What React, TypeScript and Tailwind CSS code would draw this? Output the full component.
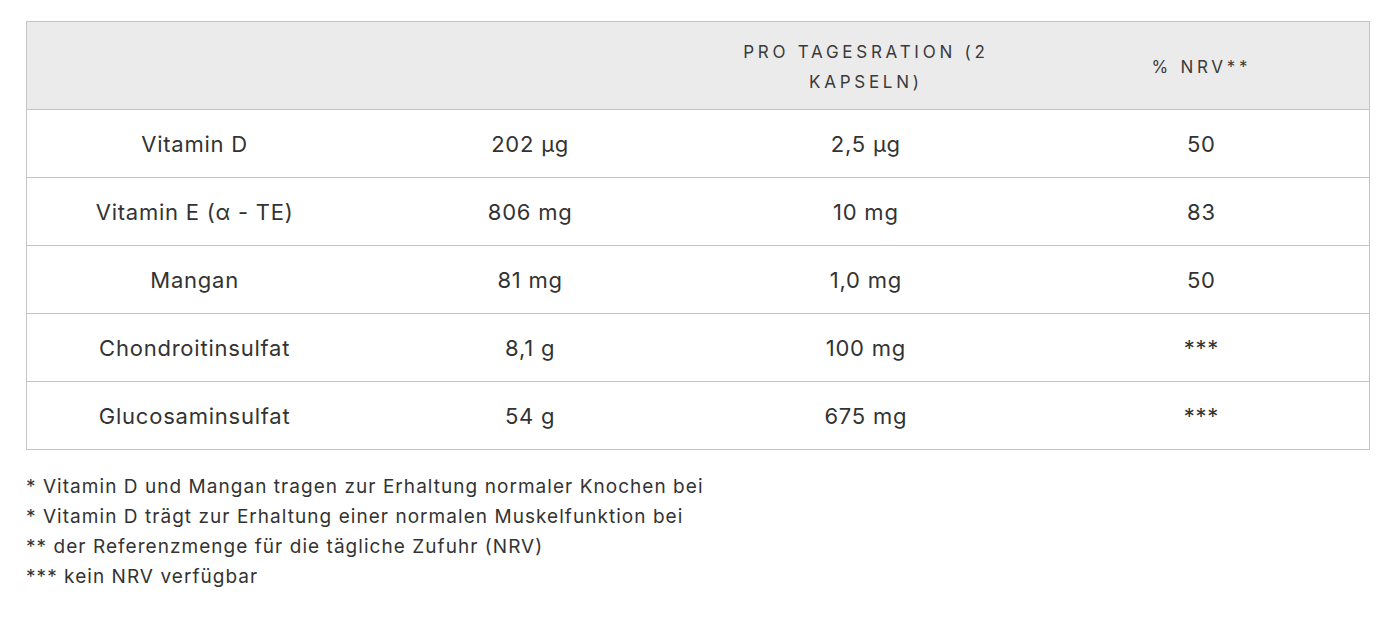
import React from "react";

const rows = [
  ["Vitamin D", "202 µg", "2,5 µg", "50"],
  ["Vitamin E (α - TE)", "806 mg", "10 mg", "83"],
  ["Mangan", "81 mg", "1,0 mg", "50"],
  ["Chondroitinsulfat", "8,1 g", "100 mg", "***"],
  ["Glucosaminsulfat", "54 g", "675 mg", "***"],
];

export default function App() {
  return (
    <div
      className="min-h-[618px] bg-white pt-[21px] pl-[26px] text-[#333333]"
      style={{ fontFamily: "Inter, 'Noto Sans', 'Liberation Sans', sans-serif" }}
    >
      <table className="w-[1344px] table-fixed border-collapse border border-[#c4c4c4]">
        <thead>
          <tr className="h-[88px] bg-[#ebebeb]">
            <th className="px-4 font-normal"></th>
            <th className="px-4 font-normal"></th>
            <th className="px-4 pt-[2px] text-center text-[17px] font-normal uppercase leading-[30px] tracking-[0.22em] text-[#3a3a3a]">
              Pro Tagesration (2 Kapseln)
            </th>
            <th className="px-4 pt-[2px] text-center text-[17px] font-normal uppercase leading-[30px] tracking-[0.22em] text-[#3a3a3a]">
              % NRV**
            </th>
          </tr>
        </thead>
        <tbody>
          {rows.map((r, i) => (
            <tr key={i} className="h-[68px] border-t border-[#c4c4c4]">
              {r.map((c, j) => (
                <td key={j} className="px-4 text-center text-[22px] leading-[28px] tracking-[0.035em]">
                  {c}
                </td>
              ))}
            </tr>
          ))}
        </tbody>
      </table>
      <div className="mt-[22px] text-[19px] leading-[30px] tracking-[0.055em]">
        <p>* Vitamin D und Mangan tragen zur Erhaltung normaler Knochen bei</p>
        <p>* Vitamin D trägt zur Erhaltung einer normalen Muskelfunktion bei</p>
        <p>** der Referenzmenge für die tägliche Zufuhr (NRV)</p>
        <p>*** kein NRV verfügbar</p>
      </div>
    </div>
  );
}
